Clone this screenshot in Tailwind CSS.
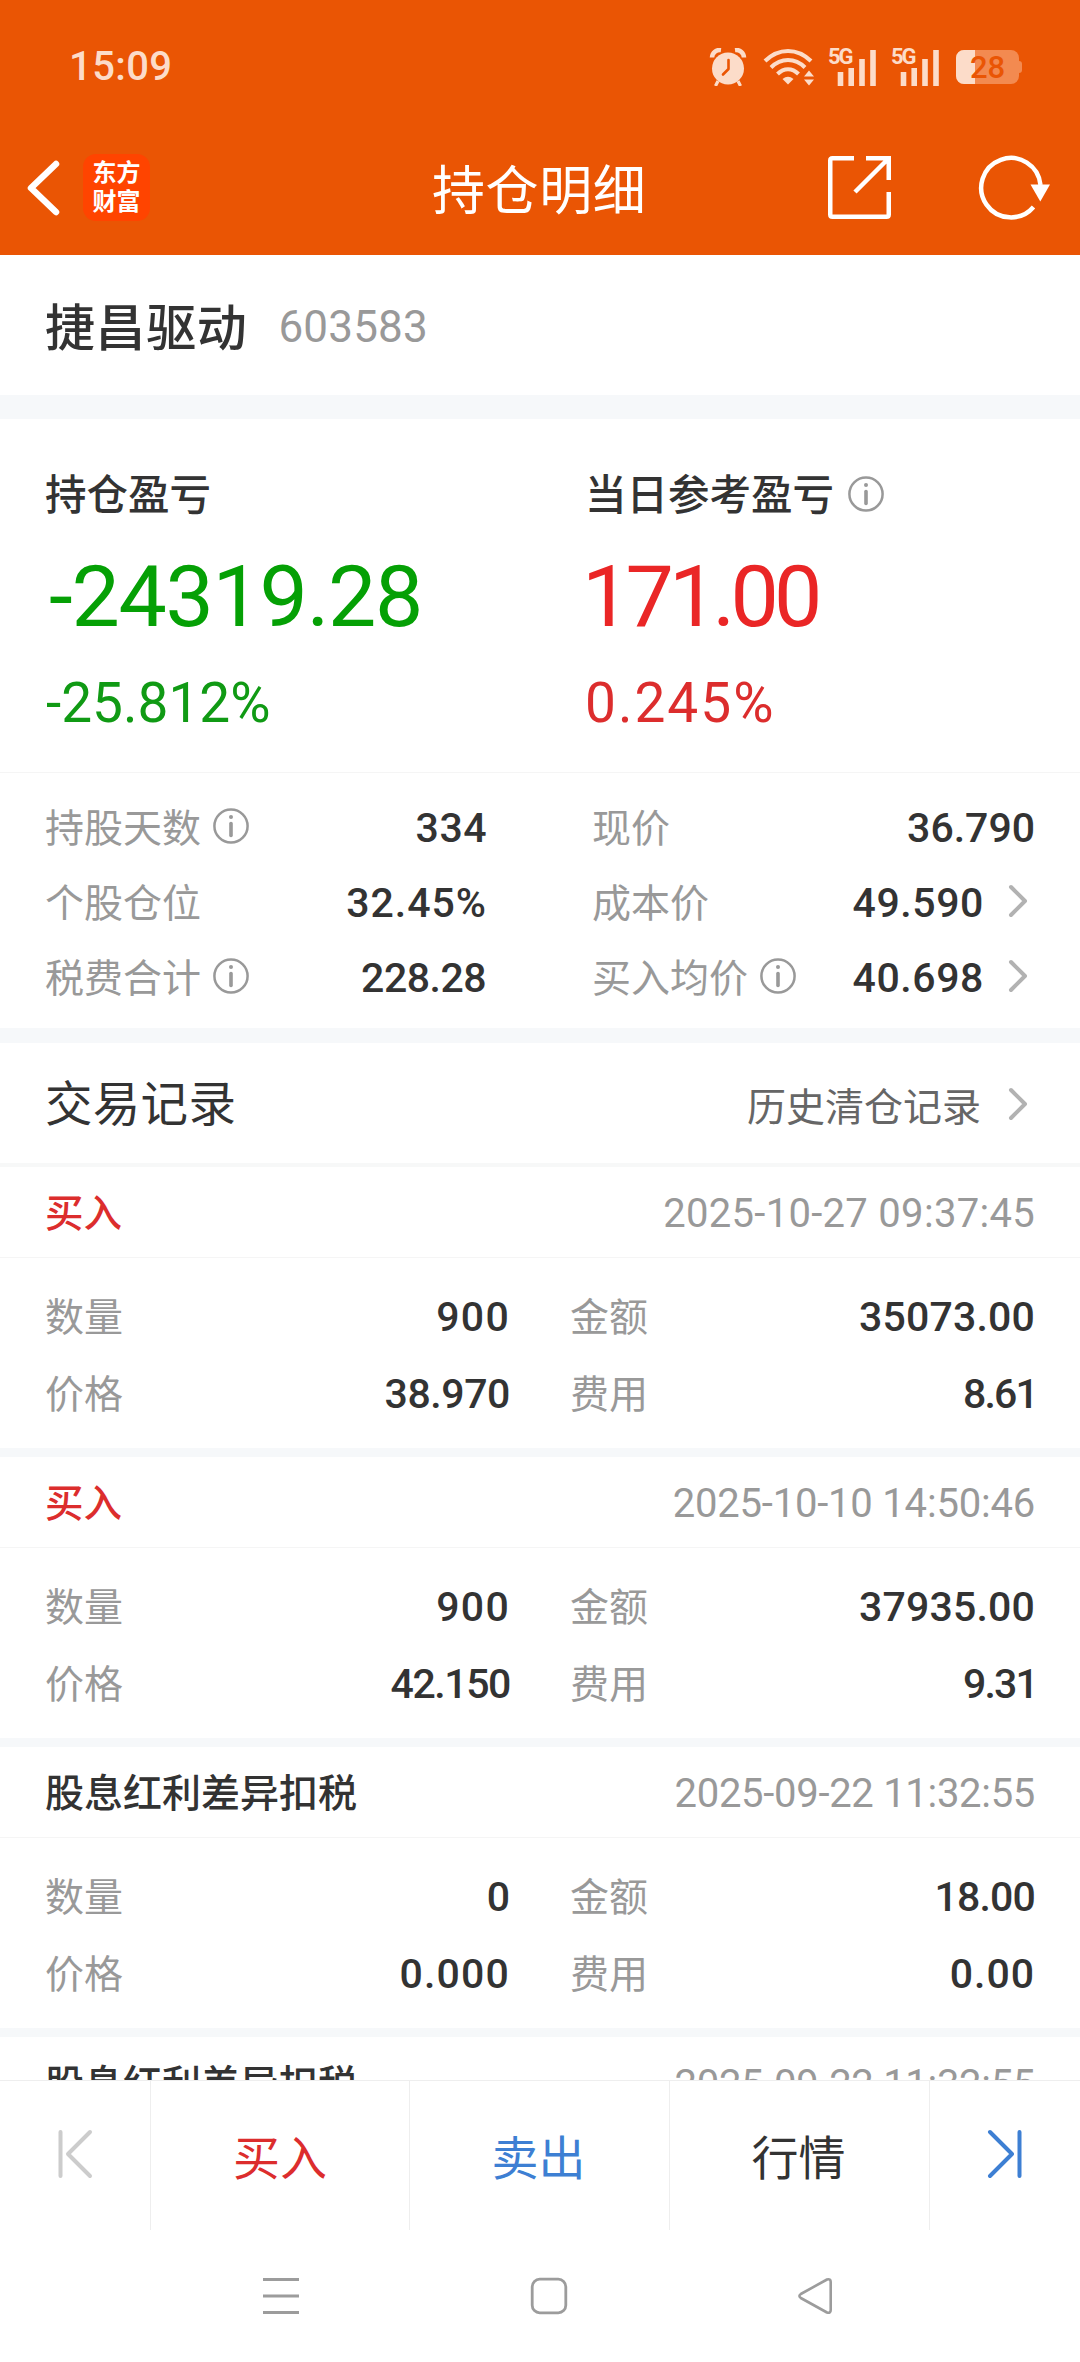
<!DOCTYPE html>
<html lang="zh-CN">
<head>
  <meta charset="UTF-8" />
  <meta name="viewport" content="width=device-width, initial-scale=1.0"/>
  <title>持仓明细</title>
  <script src="https://cdn.jsdelivr.net/npm/@tailwindcss/browser@4"></script>
</head>
<body class="bg-white">
  <!-- shared icons -->
  <svg class="hidden">
    <symbol id="info" viewBox="0 0 36 36">
      <circle cx="18" cy="18" r="16.6" fill="none" stroke="#999" stroke-width="2.5"/>
      <circle cx="18" cy="9" r="2" fill="#999"/>
      <path d="M18 15.5v12" stroke="#999" stroke-width="3.6" stroke-linecap="round"/>
    </symbol>
    <symbol id="chevron" viewBox="0 0 20 34">
      <path d="M3 3l14 14L3 31" fill="none" stroke="#b2b2b2" stroke-width="4" stroke-linecap="round" stroke-linejoin="round"/>
    </symbol>
    <symbol id="signal" viewBox="0 0 50 38">
      <path d="M12.5 24v14M23.2 20v18M34 11v27M45 2v36" stroke="#fcdcc9" stroke-width="5.6"/>
    </symbol>
  </svg>

  <div class="w-[1080px] h-[2362px] flex flex-col overflow-hidden text-[39px] leading-none text-[#333] font-['Roboto','Noto_Sans_CJK_SC',sans-serif]">

    <header class="h-[255px] shrink-0 bg-[#ea5504]">
      <!-- status bar -->
      <div class="h-[134px] pl-[69px] pr-[57px] flex items-center justify-between text-[#fcdcc9]">
        <span class="text-[40px] font-medium tracking-[0.4px]">15:09</span>
        <div class="flex items-center">
          <svg class="w-[38px] h-[38px]" viewBox="0 0 38 38">
            <path d="M3 9.500A8 8 0 0 1 12 2M35 9.500A8 8 0 0 0 26 2" fill="none" stroke="#fcdcc9" stroke-width="4.500"/>
            <circle cx="19" cy="20.500" r="16" fill="#fcdcc9"/>
            <path d="M9 33l-2.500 5M29 33l2.500 5" stroke="#fcdcc9" stroke-width="3.200"/>
            <path d="M19.500 12v9l-5.500 5.500" fill="none" stroke="#ea5504" stroke-width="2.600" stroke-linecap="round" stroke-linejoin="round"/>
          </svg>
          <svg class="w-[52px] h-[38px] ml-[16px]" viewBox="0 0 52 38">
            <g fill="none" stroke="#fcdcc9" stroke-width="4">
              <path d="M2 13C15.500-.5 34.500-.5 48 13"/>
              <path d="M8 19.500C18 9.500 32 9.500 42 19.500"/>
              <path d="M14.500 26C21 19.500 29 19.500 35.500 26"/>
            </g>
            <path d="M19.500 31Q25 26.500 30.500 31L25 36.500z" fill="#fcdcc9"/>
            <path d="M41 28.500l5-6 5 6zM41 31.500h10l-5 6z" fill="#fcdcc9"/>
          </svg>
          <div class="relative ml-[13px] w-[50px] h-[38px]">
            <svg class="w-[50px] h-[38px]"><use href="#signal"/></svg>
            <span class="absolute left-0 -top-[2px] text-[22px] font-bold tracking-[-2px]">5G</span>
          </div>
          <div class="relative ml-[13px] w-[50px] h-[38px]">
            <svg class="w-[50px] h-[38px]"><use href="#signal"/></svg>
            <span class="absolute left-0 -top-[2px] text-[22px] font-bold tracking-[-2px]">5G</span>
          </div>
          <div class="relative ml-[15px] w-[67px] h-[34px] flex items-center">
            <div class="w-[63px] h-[34px] rounded-[8px] bg-[#f38a50] overflow-hidden">
              <div class="w-[19px] h-full bg-[#fcdcc9]"></div>
            </div>
            <div class="w-[3px] h-[12px] rounded-r-full bg-[#f38a50]"></div>
            <span class="absolute left-[14px] top-[2px] text-[31px] font-medium text-[#ea5504]">28</span>
          </div>
        </div>
      </div>
      <!-- title bar -->
      <div class="h-[107px] pl-[26px] pr-[29px] flex items-center">
        <svg class="w-[34px] h-[56px]" viewBox="0 0 34 56">
          <path d="M30 4L5 28l25 24" fill="none" stroke="#fff" stroke-width="6.500" stroke-linecap="round" stroke-linejoin="round"/>
        </svg>
        <div class="ml-[23px] w-[67px] h-[67px] rounded-[13px] bg-[#ff4400] flex flex-col items-center justify-center text-white text-[24px] leading-[29px] font-bold">
          <span>东方</span>
          <span>财富</span>
        </div>
        <h1 class="ml-[282px] w-[216px] pt-[9px] text-[53px] tracking-[0.6px] text-white whitespace-nowrap">持仓明细</h1>
        <svg class="ml-[180px] w-[63px] h-[63px]" viewBox="0 0 63 63" fill="none" stroke="#fff" stroke-width="4.500">
          <path d="M26 2.250H4.500Q2.250 2.250 2.250 4.500V58.500Q2.250 60.750 4.500 60.750H58.500Q60.750 60.750 60.750 58.500V36"/>
          <path d="M38 2.250H60.750V24M60 3L27 36"/>
        </svg>
        <svg class="ml-[87px] w-[73px] h-[65px]" viewBox="0 0 73 65">
          <path d="M62.500 30A29.700 29.700 0 1 0 55.500 52" fill="none" stroke="#fff" stroke-width="4.500"/>
          <path d="M52.500 29.500h19.500l-9.700 17z" fill="#fff"/>
        </svg>
      </div>
    </header>

    <!-- stock name -->
    <div class="h-[140px] shrink-0 pl-[45px] pt-[3px] flex items-center">
      <span class="pt-[4px] text-[50px] tracking-[0.6px] font-medium">捷昌驱动</span>
      <span class="ml-[31px] text-[44px] tracking-[0.2px] text-[#999]">603583</span>
    </div>
    <div class="h-[24px] shrink-0 bg-[#f6f8fa]"></div>

    <!-- profit and loss -->
    <section class="h-[354px] shrink-0 pl-[45px] pt-[56px] flex border-b border-[#f5f5f5]">
      <div class="w-[540px]">
        <div class="h-[42px] flex items-center text-[41.500px] font-medium">持仓盈亏</div>
        <div class="mt-[37px] ml-[4px] text-[86px] tracking-[-1.3px] text-[#05a005]">-24319.28</div>
        <div class="mt-[36px] ml-px text-[55px] text-[#109a14]">-25.812%</div>
      </div>
      <div>
        <div class="h-[42px] flex items-center text-[41.500px] font-medium">当日参考盈亏
          <svg class="ml-[14px] -mt-[5px] w-[36px] h-[36px]"><use href="#info"/></svg>
        </div>
        <div class="mt-[37px] -ml-[3px] text-[86px] tracking-[-4.8px] text-[#ea2626]">171.00</div>
        <div class="mt-[36px] text-[55px] tracking-[2px] text-[#dc2d2d]">0.245%</div>
      </div>
    </section>

    <!-- position figures -->
    <section class="h-[255px] shrink-0 pl-[45px] pr-[45px] pt-[17px] flex">
      <div class="w-[442px]">
        <div class="h-[75px] flex items-center">
          <span class="pt-[3px] text-[#999]">持股天数</span>
          <svg class="ml-[12px] -mt-[4px] w-[36px] h-[36px]"><use href="#info"/></svg>
          <span class="ml-auto pt-[2px] text-[41px] tracking-[0.5px] font-medium">334</span>
        </div>
        <div class="h-[75px] flex items-center">
          <span class="pt-[3px] text-[#999]">个股仓位</span>
          <span class="ml-auto pt-[2px] text-[41px] tracking-[1px] font-medium">32.45%</span>
        </div>
        <div class="h-[75px] flex items-center">
          <span class="pt-[3px] text-[#999]">税费合计</span>
          <svg class="ml-[12px] -mt-[4px] w-[36px] h-[36px]"><use href="#info"/></svg>
          <span class="ml-auto mr-px pt-[2px] text-[41px] tracking-[-0.5px] font-medium">228.28</span>
        </div>
      </div>
      <div class="ml-[105px] flex-1">
        <div class="h-[75px] flex items-center">
          <span class="pt-[3px] text-[#999]">现价</span>
          <span class="ml-auto pt-[2px] text-[41px] font-medium">36.790</span>
        </div>
        <div class="h-[75px] flex items-center">
          <span class="pt-[3px] text-[#999]">成本价</span>
          <span class="ml-auto pt-[2px] text-[41px] tracking-[0.6px] font-medium">49.590</span>
          <svg class="ml-[24px] mr-[7px] -mt-[4px] w-[20px] h-[34px]"><use href="#chevron"/></svg>
        </div>
        <div class="h-[75px] flex items-center">
          <span class="pt-[3px] text-[#999]">买入均价</span>
          <svg class="ml-[12px] -mt-[4px] w-[36px] h-[36px]"><use href="#info"/></svg>
          <span class="ml-auto pt-[2px] text-[41px] tracking-[0.6px] font-medium">40.698</span>
          <svg class="ml-[24px] mr-[7px] -mt-[4px] w-[20px] h-[34px]"><use href="#chevron"/></svg>
        </div>
      </div>
    </section>
    <div class="h-[15px] shrink-0 bg-[#f6f8fa]"></div>

    <!-- trade records -->
    <div class="h-[124px] shrink-0 pl-[45px] pr-[52px] pt-[1px] flex items-center border-b-4 border-[#f7f8f8]">
      <h2 class="pt-[4px] text-[47.500px] tracking-[0.3px]">交易记录</h2>
      <span class="ml-auto pt-[9px] text-[#666]">历史清仓记录</span>
      <svg class="ml-[27px] mt-px w-[20px] h-[34px]"><use href="#chevron"/></svg>
    </div>

    <main class="h-[913px] shrink-0 overflow-hidden">
      <article class="h-[290px] border-b-[9px] border-[#f6f8fa]">
        <div class="h-[91px] pl-[45px] pr-[45px] pt-[4px] flex items-center justify-between border-b border-[#f5f5f5]">
          <span class="pt-px text-[38.500px] font-medium text-[#dc2d2d]">买入</span>
          <span class="text-[40px] tracking-[0.3px] text-[#999]">2025-10-27 09:37:45</span>
        </div>
        <div class="pl-[45px] pr-[45px] pt-[21px] grid grid-cols-[465px_1fr] gap-x-[60px]">
          <div class="h-[77px] flex items-center justify-between"><span class="pt-px text-[#999]">数量</span><span class="text-[41px] tracking-[1.3px] font-medium">900</span></div>
          <div class="h-[77px] flex items-center justify-between"><span class="pt-px text-[#999]">金额</span><span class="text-[41px] tracking-[0.2px] font-medium">35073.00</span></div>
          <div class="h-[77px] flex items-center justify-between"><span class="pt-px text-[#999]">价格</span><span class="text-[41px] tracking-[-0.4px] font-medium">38.970</span></div>
          <div class="h-[77px] flex items-center justify-between"><span class="pt-px text-[#999]">费用</span><span class="mr-[-2px] text-[41px] tracking-[-1.8px] font-medium">8.61</span></div>
        </div>
      </article>

      <article class="h-[290px] border-b-[9px] border-[#f6f8fa]">
        <div class="h-[91px] pl-[45px] pr-[45px] pt-[4px] flex items-center justify-between border-b border-[#f5f5f5]">
          <span class="pt-px text-[38.500px] font-medium text-[#dc2d2d]">买入</span>
          <span class="text-[40px] tracking-[-0.2px] text-[#999]">2025-10-10 14:50:46</span>
        </div>
        <div class="pl-[45px] pr-[45px] pt-[21px] grid grid-cols-[465px_1fr] gap-x-[60px]">
          <div class="h-[77px] flex items-center justify-between"><span class="pt-px text-[#999]">数量</span><span class="text-[41px] tracking-[1.3px] font-medium">900</span></div>
          <div class="h-[77px] flex items-center justify-between"><span class="pt-px text-[#999]">金额</span><span class="text-[41px] tracking-[0.2px] font-medium">37935.00</span></div>
          <div class="h-[77px] flex items-center justify-between"><span class="pt-px text-[#999]">价格</span><span class="text-[41px] tracking-[-1.4px] font-medium">42.150</span></div>
          <div class="h-[77px] flex items-center justify-between"><span class="pt-px text-[#999]">费用</span><span class="mr-[-2px] text-[41px] tracking-[-1.8px] font-medium">9.31</span></div>
        </div>
      </article>

      <article class="h-[290px] border-b-[9px] border-[#f6f8fa]">
        <div class="h-[91px] pl-[45px] pr-[45px] pt-[4px] flex items-center justify-between border-b border-[#f5f5f5]">
          <span class="pt-px font-medium">股息红利差异扣税</span>
          <span class="text-[40px] tracking-[-0.3px] text-[#999]">2025-09-22 11:32:55</span>
        </div>
        <div class="pl-[45px] pr-[45px] pt-[21px] grid grid-cols-[465px_1fr] gap-x-[60px]">
          <div class="h-[77px] flex items-center justify-between"><span class="pt-px text-[#999]">数量</span><span class="text-[41px] font-medium">0</span></div>
          <div class="h-[77px] flex items-center justify-between"><span class="pt-px text-[#999]">金额</span><span class="text-[41px] tracking-[-0.8px] font-medium">18.00</span></div>
          <div class="h-[77px] flex items-center justify-between"><span class="pt-px text-[#999]">价格</span><span class="text-[41px] tracking-[1.2px] font-medium">0.000</span></div>
          <div class="h-[77px] flex items-center justify-between"><span class="pt-px text-[#999]">费用</span><span class="text-[41px] tracking-[1px] font-medium">0.00</span></div>
        </div>
      </article>

      <article>
        <div class="h-[91px] pl-[45px] pr-[45px] pt-[4px] flex items-center justify-between">
          <span class="pt-px font-medium">股息红利差异扣税</span>
          <span class="text-[40px] tracking-[-0.3px] text-[#999]">2025-09-22 11:32:55</span>
        </div>
      </article>
    </main>

    <!-- action bar -->
    <div class="h-[150px] shrink-0 grid grid-cols-[151px_259px_260px_260px_150px] border-t border-[#eee] text-[47px] bg-white">
      <div class="flex items-center justify-center border-r border-[#eee]">
        <svg class="w-[36px] h-[50px] -mt-[4px]" viewBox="0 0 36 50" fill="none" stroke="#ccc" stroke-width="4" stroke-linecap="round" stroke-linejoin="round">
          <path d="M3.500 3v44M33 3L11 25l22 22"/>
        </svg>
      </div>
      <div class="flex items-center justify-center pt-[5px] border-r border-[#eee] text-[#dc2d2d]">买入</div>
      <div class="flex items-center justify-center pt-[5px] pr-[2px] border-r border-[#eee] text-[#3d7fd3]">卖出</div>
      <div class="flex items-center justify-center pt-[5px] pr-[2px] border-r border-[#eee]">行情</div>
      <div class="flex items-center justify-center">
        <svg class="w-[36px] h-[50px] -mt-[4px]" viewBox="0 0 36 50" fill="none" stroke="#3d7fd3" stroke-width="4" stroke-linecap="round" stroke-linejoin="round">
          <path d="M32.500 3v44M3 3l22 22L3 47"/>
        </svg>
      </div>
    </div>

    <!-- system navigation -->
    <nav class="h-[132px] shrink-0 pl-[263px] pr-[247px] flex items-center">
      <svg class="w-[36px] h-[38px]" viewBox="0 0 36 38"><path d="M0 2.500h36M0 19h36M0 35.500h36" stroke="#9c9c9c" stroke-width="3.200"/></svg>
      <svg class="ml-[231px] w-[38px] h-[38px]" viewBox="0 0 38 38"><rect x="2.200" y="2.200" width="33.600" height="33.600" rx="7.500" fill="none" stroke="#9c9c9c" stroke-width="2.800"/></svg>
      <svg class="ml-auto w-[36px] h-[38px]" viewBox="0 0 36 38"><path d="M30 2.500L3.800 17Q1 19 3.800 21L30 35.500Q33.700 36.500 33.700 33V5Q33.700 1.500 30 2.500z" fill="none" stroke="#9c9c9c" stroke-width="2.600" stroke-linejoin="round"/></svg>
    </nav>
  </div>
</body>
</html>
